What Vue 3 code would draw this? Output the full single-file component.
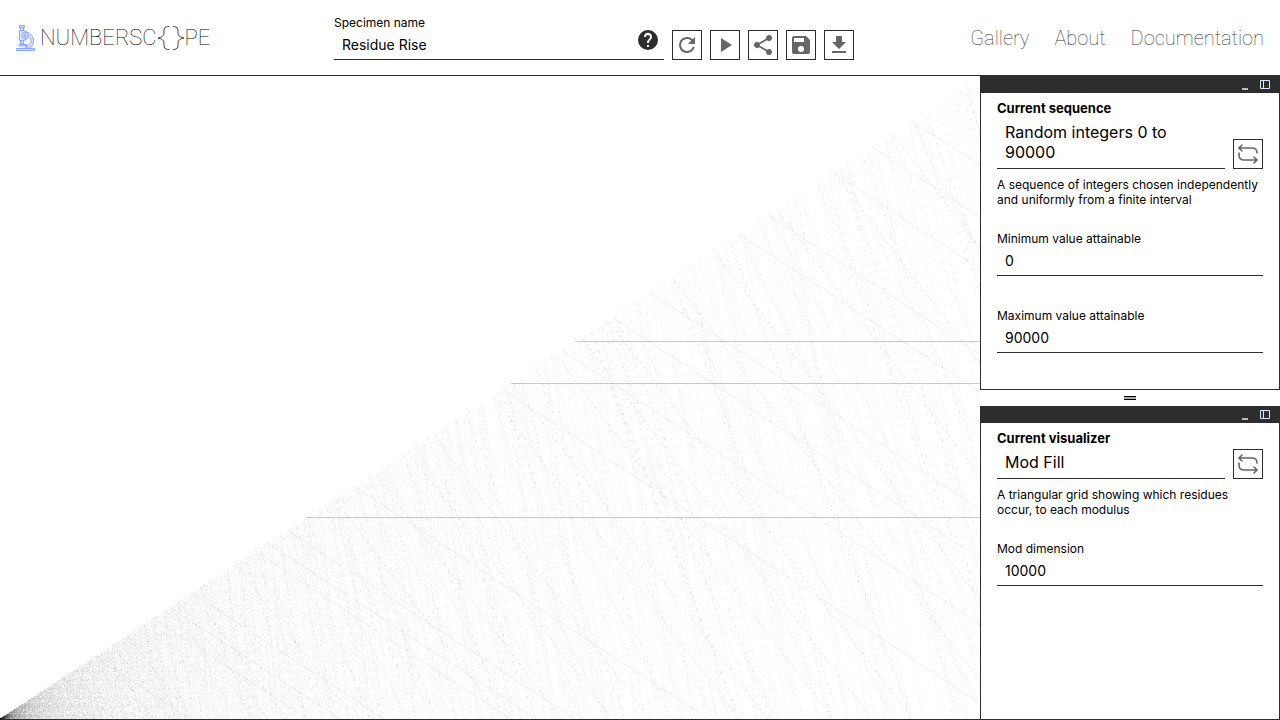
<script setup>
import { onBeforeUnmount, onMounted, ref } from 'vue'

const canvas = ref(null)
const stage = ref(null)
const specimen = ref('Residue Rise')
const minimum = ref('0')
const maximum = ref('90000')
const dimension = ref('10000')

const nearTerms = [
  5867, 5213, 3133, 3469, 3918, 1939, 5469, 7225, 10245, 11469, 12490, 13265,
  15082, 15673, 17000, 17796, 18612,
]

function buildTerms() {
  const terms = [...nearTerms]
  let seed = 48271
  while (terms.length < 68) {
    seed = (seed * 16807) % 2147483647
    terms.push(20000 + (seed % 70001))
  }
  return terms
}

const terms = buildTerms()

// Each cell is far smaller than a pixel, so it only shows when it crosses
// one of the four sample rows inside that pixel.
function draw() {
  const width = stage.value.clientWidth
  const height = stage.value.clientHeight
  if (!width || !height) return
  const el = canvas.value
  el.width = width
  el.height = height
  const context = el.getContext('2d')
  const image = context.createImageData(width, height)
  const light = new Float32Array(width * height).fill(1)
  const size = Number(dimension.value) || 1
  const sx = width / size
  const sy = height / size
  const keep = 1 - 0.23 * Math.min(1, sx)
  for (const term of terms) {
    for (let m = 1; m <= size; m++) {
      const low = (term % m) * sy
      const sample = Math.ceil(low * 4) / 4
      if (sample >= low + sy) continue
      const x = Math.min(width - 1, Math.floor((m - 1) * sx))
      const y = height - 1 - Math.floor(sample)
      if (y >= 0) light[y * width + x] *= keep
    }
  }
  for (let i = 0; i < light.length; i++) {
    const v = Math.round(255 * light[i])
    image.data[i * 4] = v
    image.data[i * 4 + 1] = v
    image.data[i * 4 + 2] = v
    image.data[i * 4 + 3] = 255
  }
  context.putImageData(image, 0, 0)
}

onMounted(() => {
  draw()
  window.addEventListener('resize', draw)
})
onBeforeUnmount(() => window.removeEventListener('resize', draw))

const actions = [
  { name: 'Refresh', path: 'M17.65 6.35A7.96 7.96 0 0 0 12 4a8 8 0 1 0 7.73 10h-2.08A6 6 0 1 1 12 6c1.66 0 3.14.69 4.22 1.78L13 11h7V4z' },
  { name: 'Play', path: 'M8 5v14l11-7z' },
  { name: 'Share', path: 'M18 16.08c-.76 0-1.44.3-1.96.77L8.91 12.7a3.3 3.3 0 0 0 0-1.4l7.05-4.11A3 3 0 1 0 15 5c0 .24.04.47.09.7L8.04 9.81a3 3 0 1 0 0 4.38l7.12 4.16c-.05.21-.08.43-.08.65a2.92 2.92 0 1 0 2.92-2.92z' },
  { name: 'Save', path: 'M17 3H5a2 2 0 0 0-2 2v14a2 2 0 0 0 2 2h14a2 2 0 0 0 2-2V7zm-5 16a3 3 0 1 1 0-6 3 3 0 0 1 0 6zm3-10H5V5h10z' },
  { name: 'Download', path: 'M19 9h-4V3H9v6H5l7 7zM5 18v2h14v-2z' },
]
</script>

<template>
  <div class="page">
    <header class="topbar">
      <a class="logo" href="#" aria-label="Numberscope">
        <svg class="scope" viewBox="0 0 20 28" aria-hidden="true">
          <g fill="#dbe5ff" stroke="#86a5ff" stroke-width="1">
            <path d="M3.500 1.500h5v2h-5zM4.500 3.500h3v3h-3z" />
            <path d="M3.500 6.500h5l3 2v6l-3 2h-5z" />
            <path d="M4.500 16.500h3v3h-3z" />
            <path d="M11 8c4 2 7 5 6.500 10-.3 3-2 5-4 6H10v-2c3-.5 5-2 5-5s-1.500-4-3.500-5z" />
            <circle cx="9" cy="11.500" r="3.300" />
            <circle cx="9" cy="11.500" r="1.200" />
            <path d="M3 20.500h8v1.500H3zM.5 24.500h18v2H.5z" />
          </g>
        </svg>
        <span class="wordmark">NUMBERSC</span>
        <svg class="braces" viewBox="0 0 28 26" aria-hidden="true">
          <path d="M12 1.500H10.500Q7 2 7 5V8Q7 12 1 13Q7 14 7 18V21Q7 24 10.500 24.500H12M16 1.500h1.500Q21 2 21 5V8Q21 12 27 13Q21 14 21 18V21Q21 24 17.500 24.500H16" fill="none" stroke="#444" />
        </svg>
        <span class="wordmark">PE</span>
      </a>

      <div class="tools">
        <div class="field specimen">
          <label for="specimen">Specimen name</label>
          <div class="entry">
            <input id="specimen" v-model="specimen" type="text" />
            <button class="help" type="button" aria-label="Help">
              <svg viewBox="0 0 24 24"><path fill="#2d2d2d" d="M12 2a10 10 0 1 0 0 20 10 10 0 0 0 0-20zm1 17h-2v-2h2zm2.070-7.750-.9.920C13.450 12.900 13 13.500 13 15h-2v-.5c0-1.100.45-2.100 1.170-2.830l1.240-1.260A2 2 0 1 0 10 9H8a4 4 0 1 1 7.070 2.250z" /></svg>
            </button>
          </div>
        </div>
        <button v-for="a in actions" :key="a.name" class="square" type="button" :aria-label="a.name">
          <svg viewBox="0 0 24 24"><path :d="a.path" fill="#666" /></svg>
        </button>
      </div>

      <nav>
        <a href="#">Gallery</a>
        <a href="#">About</a>
        <a href="#">Documentation</a>
      </nav>
    </header>

    <main>
      <section ref="stage" class="stage"><canvas ref="canvas"></canvas></section>

      <aside>
        <section class="panel sequence">
          <div class="bar">
            <button type="button" aria-label="Minimize"><svg viewBox="0 0 10 10"><path d="M2 9h6" stroke="#bbb" stroke-width="2" /></svg></button>
            <button type="button" aria-label="Dock"><svg viewBox="0 0 10 10"><path d="M.5.5h9v8h-9zM3.500.5v8" fill="none" stroke="#dde6ff" /></svg></button>
          </div>
          <div class="body">
            <h2>Current sequence</h2>
            <div class="chooser">
              <span class="current">Random integers 0 to 90000</span>
              <button class="square" type="button" aria-label="Change sequence">
                <svg viewBox="0 0 24 24" fill="none" stroke="#666" stroke-width="1.600" stroke-linecap="round"><path d="M6 3 3 6l3 3M3 6h13q5 0 5 5M3 11v2q0 5 5 5h13M18 15l3 3-3 3" /></svg>
              </button>
            </div>
            <p>A sequence of integers chosen independently and uniformly from a finite interval</p>
            <div class="field">
              <label for="minimum">Minimum value attainable</label>
              <input id="minimum" v-model="minimum" type="text" />
            </div>
            <div class="field">
              <label for="maximum">Maximum value attainable</label>
              <input id="maximum" v-model="maximum" type="text" />
            </div>
          </div>
        </section>

        <div class="grip" role="separator"><i></i></div>

        <section class="panel visualizer">
          <div class="bar">
            <button type="button" aria-label="Minimize"><svg viewBox="0 0 10 10"><path d="M2 9h6" stroke="#bbb" stroke-width="2" /></svg></button>
            <button type="button" aria-label="Dock"><svg viewBox="0 0 10 10"><path d="M.5.5h9v8h-9zM3.500.5v8" fill="none" stroke="#dde6ff" /></svg></button>
          </div>
          <div class="body">
            <h2>Current visualizer</h2>
            <div class="chooser">
              <span class="current">Mod Fill</span>
              <button class="square" type="button" aria-label="Change visualizer">
                <svg viewBox="0 0 24 24" fill="none" stroke="#666" stroke-width="1.600" stroke-linecap="round"><path d="M6 3 3 6l3 3M3 6h13q5 0 5 5M3 11v2q0 5 5 5h13M18 15l3 3-3 3" /></svg>
              </button>
            </div>
            <p>A triangular grid showing which residues occur, to each modulus</p>
            <div class="field">
              <label for="dimension">Mod dimension</label>
              <input id="dimension" v-model="dimension" type="text" @change="draw" />
            </div>
          </div>
        </section>
      </aside>
    </main>
  </div>
</template>

<style>
body {
  margin: 0;
  background: #fff;
}
</style>

<style scoped>
* {
  box-sizing: border-box;
}
.page {
  display: flex;
  flex-direction: column;
  height: 100vh;
  color: #000;
  font-family: Inter, "Liberation Sans", sans-serif;
  font-size: 12px;
  line-height: 15px;
}
button {
  padding: 0;
  border: 0;
  background: none;
}
svg {
  display: block;
}
.topbar {
  display: grid;
  grid-template-columns: 318px 1fr auto;
  align-items: center;
  flex: none;
  padding: 0 16px;
  border-bottom: 1px solid #2d2d2d;
}
.logo {
  display: flex;
  align-items: center;
  color: #000;
  text-decoration: none;
}
.scope {
  width: 20px;
  height: 28px;
  margin-right: 4px;
}
.wordmark {
  font: 100 22px/28px Roboto, sans-serif;
}
.braces {
  width: 28px;
  height: 26px;
}
.tools {
  display: flex;
  align-items: flex-end;
  gap: 8px;
  padding: 15px 0;
}
.field {
  display: flex;
  flex-direction: column;
}
.field label {
  height: 15px;
}
.specimen {
  width: 330px;
}
.entry {
  position: relative;
}
input {
  display: block;
  width: 100%;
  height: 30px;
  padding: 0 8px;
  border: 0;
  border-bottom: 1px solid #2d2d2d;
  border-radius: 0;
  outline: 0;
  background: transparent;
  color: #000;
  font: 14px/20px Inter, "Liberation Sans", sans-serif;
}
.help {
  position: absolute;
  top: -2px;
  right: 4px;
}
.help svg {
  width: 24px;
  height: 24px;
}
.square {
  display: grid;
  place-items: center;
  flex: none;
  width: 30px;
  height: 30px;
  border: 1px solid #2d2d2d;
  background: #fff;
}
.square svg {
  width: 24px;
  height: 24px;
}
nav {
  display: flex;
  gap: 25px;
}
nav a {
  color: #333;
  font: 100 20px/28px Roboto, sans-serif;
  text-decoration: none;
}
main {
  display: flex;
  flex: 1;
  min-height: 0;
}
.stage {
  flex: 1;
  min-width: 0;
  overflow: hidden;
  border-bottom: 1px solid #2d2d2d;
}
canvas {
  display: block;
}
aside {
  display: flex;
  flex-direction: column;
  flex: none;
  width: 300px;
}
.panel {
  border: 1px solid #2d2d2d;
  border-top: 0;
}
.visualizer {
  flex: 1;
}
.bar {
  display: flex;
  justify-content: flex-end;
  align-items: center;
  gap: 10px;
  height: 17px;
  padding-right: 9px;
  background: #2d2d2d;
}
.bar svg {
  width: 10px;
  height: 10px;
}
.body {
  padding: 8px 16px 36px;
}
h2 {
  margin: 0 0 3px;
  font-size: 13px;
  line-height: 15px;
}
.chooser {
  display: flex;
  align-items: flex-end;
  gap: 8px;
}
.current {
  flex: 1;
  padding: 3px 8px 6px;
  border-bottom: 1px solid #2d2d2d;
  font-size: 16px;
  line-height: 20px;
}
p {
  margin: 8px 0 24px;
}
.body .field + .field {
  margin-top: 32px;
}
.grip {
  display: grid;
  place-items: center;
  height: 16px;
}
.grip i {
  width: 12px;
  height: 4px;
  border: solid #000;
  border-width: 1px 0;
  background: #aaa;
}
</style>
